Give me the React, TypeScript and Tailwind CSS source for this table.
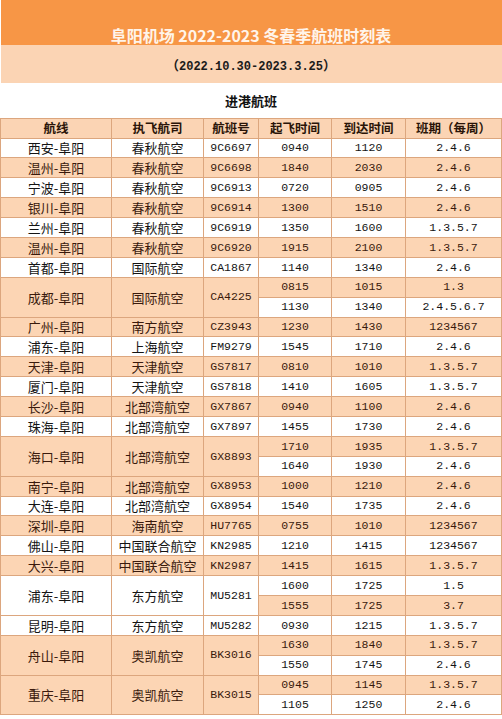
import React from "react";

type Sub = { dep: string; arr: string; days: string; p: boolean };
type Group = { route: string; airline: string; no: string; p: boolean; subs: Sub[] };

const g = (route: string, airline: string, no: string, p: boolean, subs: [string, string, string, boolean][]): Group => ({
  route,
  airline,
  no,
  p,
  subs: subs.map(([dep, arr, days, sp]) => ({ dep, arr, days, p: sp })),
});

const data: Group[] = [
  g("西安-阜阳", "春秋航空", "9C6697", false, [["0940", "1120", "2.4.6", false]]),
  g("温州-阜阳", "春秋航空", "9C6698", true, [["1840", "2030", "2.4.6", true]]),
  g("宁波-阜阳", "春秋航空", "9C6913", false, [["0720", "0905", "2.4.6", false]]),
  g("银川-阜阳", "春秋航空", "9C6914", true, [["1300", "1510", "2.4.6", true]]),
  g("兰州-阜阳", "春秋航空", "9C6919", false, [["1350", "1600", "1.3.5.7", false]]),
  g("温州-阜阳", "春秋航空", "9C6920", true, [["1915", "2100", "1.3.5.7", true]]),
  g("首都-阜阳", "国际航空", "CA1867", false, [["1140", "1340", "2.4.6", false]]),
  g("成都-阜阳", "国际航空", "CA4225", true, [
    ["0815", "1015", "1.3", true],
    ["1130", "1340", "2.4.5.6.7", false],
  ]),
  g("广州-阜阳", "南方航空", "CZ3943", true, [["1230", "1430", "1234567", true]]),
  g("浦东-阜阳", "上海航空", "FM9279", false, [["1545", "1710", "2.4.6", false]]),
  g("天津-阜阳", "天津航空", "GS7817", true, [["0810", "1010", "1.3.5.7", true]]),
  g("厦门-阜阳", "天津航空", "GS7818", false, [["1410", "1605", "1.3.5.7", false]]),
  g("长沙-阜阳", "北部湾航空", "GX7867", true, [["0940", "1100", "2.4.6", true]]),
  g("珠海-阜阳", "北部湾航空", "GX7897", false, [["1455", "1730", "2.4.6", false]]),
  g("海口-阜阳", "北部湾航空", "GX8893", true, [
    ["1710", "1935", "1.3.5.7", true],
    ["1640", "1930", "2.4.6", false],
  ]),
  g("南宁-阜阳", "北部湾航空", "GX8953", true, [["1000", "1210", "2.4.6", true]]),
  g("大连-阜阳", "北部湾航空", "GX8954", false, [["1540", "1735", "2.4.6", false]]),
  g("深圳-阜阳", "海南航空", "HU7765", true, [["0755", "1010", "1234567", true]]),
  g("佛山-阜阳", "中国联合航空", "KN2985", false, [["1210", "1415", "1234567", false]]),
  g("大兴-阜阳", "中国联合航空", "KN2987", true, [["1415", "1615", "1.3.5.7", true]]),
  g("浦东-阜阳", "东方航空", "MU5281", false, [
    ["1600", "1725", "1.5", false],
    ["1555", "1725", "3.7", true],
  ]),
  g("昆明-阜阳", "东方航空", "MU5282", false, [["0930", "1215", "1.3.5.7", false]]),
  g("舟山-阜阳", "奥凯航空", "BK3016", true, [
    ["1630", "1840", "1.3.5.7", true],
    ["1550", "1745", "2.4.6", false],
  ]),
  g("重庆-阜阳", "奥凯航空", "BK3015", true, [
    ["0945", "1145", "1.3.5.7", true],
    ["1105", "1250", "2.4.6", false],
  ]),
];

const cjk = { fontFamily: '"Noto Sans CJK SC", "Noto Sans", sans-serif' };
const mono = { fontFamily: '"Liberation Mono", "DejaVu Sans Mono", monospace' };

const cell = "border border-[#DCA67E] text-center align-middle p-0 leading-none";

export default function App() {
  return (
    <div className="w-[502px] h-[719px] bg-white overflow-hidden">
      <table className="w-[501px] border-collapse table-fixed">
        <colgroup>
          <col className="w-[111px]" />
          <col className="w-[92px]" />
          <col className="w-[55px]" />
          <col className="w-[73px]" />
          <col className="w-[74px]" />
          <col className="w-[96px]" />
        </colgroup>
        <tbody>
          <tr className="h-[45px]">
            <td
              colSpan={6}
              className="bg-[#F79646] text-center align-bottom p-0 text-[16px] leading-[20px] font-bold text-[#FFF4EA]"
              style={cjk}
            >
              阜阳机场 2022-2023 冬春季航班时刻表
            </td>
          </tr>
          <tr className="h-[38px]">
            <td colSpan={6} className="bg-[#FBD4B4] text-center align-middle p-0 font-bold text-[#1a1a1a]">
              <span className="text-[13px]" style={cjk}>（</span>
              <span className="text-[12px]" style={mono}>2022.10.30-2023.3.25</span>
              <span className="text-[13px]" style={cjk}>）</span>
            </td>
          </tr>
          <tr className="h-[35px]">
            <td colSpan={6} className="bg-white text-center align-middle p-0 text-[13px] font-bold text-[#111] border-b border-[#DCA67E]" style={cjk}>
              进港航班
            </td>
          </tr>
          <tr className="h-[20px] bg-[#FBD4B4] text-[12.5px] font-bold text-[#2a1408]" style={cjk}>
            <td className={cell}>航线</td>
            <td className={cell}>执飞航司</td>
            <td className={cell}>航班号</td>
            <td className={cell}>起飞时间</td>
            <td className={cell}>到达时间</td>
            <td className={cell}>班期（每周）</td>
          </tr>
          {data.map((grp, gi) =>
            grp.subs.map((s, si) => (
              <tr key={gi + "-" + si} className="h-[19.9px]">
                {si === 0 && (
                  <>
                    <td
                      rowSpan={grp.subs.length}
                      className={`${cell} text-[13px] ${grp.p ? "bg-[#FCD5B4] text-[#3a1a0c]" : "bg-white text-[#141414]"}`}
                      style={cjk}
                    >
                      {grp.route}
                    </td>
                    <td
                      rowSpan={grp.subs.length}
                      className={`${cell} text-[13px] ${grp.p ? "bg-[#FCD5B4] text-[#3a1a0c]" : "bg-white text-[#141414]"}`}
                      style={cjk}
                    >
                      {grp.airline}
                    </td>
                    <td
                      rowSpan={grp.subs.length}
                      className={`${cell} text-[11.5px] ${grp.p ? "bg-[#FCD5B4] text-[#3a1a0c]" : "bg-white text-[#141414]"}`}
                      style={mono}
                    >
                      {grp.no}
                    </td>
                  </>
                )}
                <td className={`${cell} text-[11.5px] ${s.p ? "bg-[#FCD5B4] text-[#3a1a0c]" : "bg-white text-[#141414]"}`} style={mono}>
                  {s.dep}
                </td>
                <td className={`${cell} text-[11.5px] ${s.p ? "bg-[#FCD5B4] text-[#3a1a0c]" : "bg-white text-[#141414]"}`} style={mono}>
                  {s.arr}
                </td>
                <td className={`${cell} text-[11.5px] ${s.p ? "bg-[#FCD5B4] text-[#3a1a0c]" : "bg-white text-[#141414]"}`} style={mono}>
                  {s.days}
                </td>
              </tr>
            ))
          )}
        </tbody>
      </table>
    </div>
  );
}
